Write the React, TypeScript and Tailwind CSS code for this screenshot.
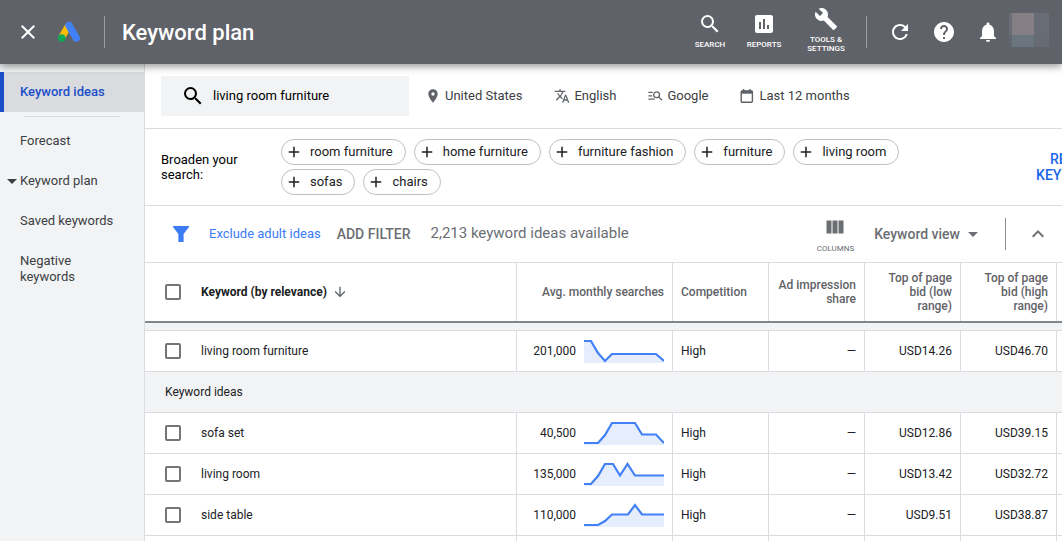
import React, { useState } from "react";
import {
  MdAdd,
  MdArrowDownward,
  MdArrowDropDown,
  MdAssessment,
  MdBuild,
  MdClose,
  MdExpandLess,
  MdHelp,
  MdNotifications,
  MdPlace,
  MdRefresh,
  MdSearch,
  MdTranslate,
} from "react-icons/md";

type Point = [number, number];

interface Keyword {
  name: string;
  searches: string;
  competition: string;
  share: string;
  low: string;
  high: string;
  trend: Point[];
}

const provided: Keyword[] = [
  {
    name: "living room furniture",
    searches: "201,000",
    competition: "High",
    share: "—",
    low: "USD14.26",
    high: "USD46.70",
    trend: [[0, 2], [7, 2], [14, 14], [21, 22], [28, 15], [72, 15], [80, 22]],
  },
];

const ideas: Keyword[] = [
  {
    name: "sofa set",
    searches: "40,500",
    competition: "High",
    share: "—",
    low: "USD12.86",
    high: "USD39.15",
    trend: [[0, 22], [14, 22], [21, 14], [28, 2], [51, 2], [58, 13.5], [72, 13.5], [80, 22]],
  },
  {
    name: "living room",
    searches: "135,000",
    competition: "High",
    share: "—",
    low: "USD13.42",
    high: "USD32.72",
    trend: [[0, 22], [7, 22], [14, 14], [21, 2], [29, 2], [36, 13.5], [43.5, 2], [51, 13.5], [80, 13.5]],
  },
  {
    name: "side table",
    searches: "110,000",
    competition: "High",
    share: "—",
    low: "USD9.51",
    high: "USD38.87",
    trend: [[0, 22], [14, 22], [21, 18], [28, 11.5], [44, 11.5], [51, 2], [58, 11.5], [80, 11.5]],
  },
];

const chips = [
  "room furniture",
  "home furniture",
  "furniture fashion",
  "furniture",
  "living room",
  "sofas",
  "chairs",
];

function AdsLogo() {
  return (
    <svg viewBox="0 0 24 24" className="size-6" fill="none" aria-hidden="true">
      <path d="M12.6 5.6 L5.7 17.6" stroke="#fbbc04" strokeWidth="7" strokeLinecap="butt" />
      <path d="M13 5.5 L20.2 18" stroke="#4280f5" strokeWidth="7.4" strokeLinecap="round" />
      <circle cx="5.7" cy="18" r="3.8" fill="#0fa958" />
    </svg>
  );
}

function FilterIcon() {
  return (
    <svg viewBox="0 0 16 16" className="size-4" fill="currentColor" aria-hidden="true">
      <path d="M0 0h16v1L10.6 8V16H5.4V8L0 1z" />
    </svg>
  );
}

function ColumnsIcon() {
  return (
    <svg viewBox="0 0 18 14" className="h-[14px] w-[18px]" fill="currentColor" aria-hidden="true">
      <path d="M0.5 0.5h5v13h-5zM6.5 0.5h5v13h-5zM12.5 0.5h5v13h-5z" />
    </svg>
  );
}

function NetworkIcon() {
  return (
    <svg
      viewBox="0 0 15 12"
      className="h-3 w-[15px] text-[#5f6368]"
      fill="none"
      stroke="currentColor"
      strokeWidth="1.3"
      aria-hidden="true"
    >
      <path d="M0.4 2.4h4.4M0.4 5.8h3.8M0.4 9.2h6.2" />
      <circle cx="8.6" cy="4.8" r="2.9" />
      <path d="M10.6 6.9 L14 10.2" />
    </svg>
  );
}

function CalendarIcon() {
  return (
    <svg
      viewBox="0 0 14 14"
      className="size-[14px] text-[#5f6368]"
      fill="none"
      stroke="currentColor"
      aria-hidden="true"
    >
      <rect x="1.2" y="2" width="11.2" height="11.2" rx="1" strokeWidth="1.4" />
      <path d="M1 3.2h11.6" strokeWidth="3" />
      <path d="M3.6 0v2M10 0v2" strokeWidth="1.4" />
    </svg>
  );
}

function Sparkline({ points }: { points: Point[] }) {
  const line = points.map((p) => p.join(",")).join(" ");
  return (
    <svg viewBox="0 0 80 24" className="h-6 w-20 shrink-0" aria-hidden="true">
      <polygon points={`0,24 ${line} 80,24`} fill="#e6edfd" />
      <polyline points={line} fill="none" stroke="#4280f5" strokeWidth="2.2" />
    </svg>
  );
}

function Check({ label }: { label: string }) {
  const [on, setOn] = useState(false);
  return (
    <input
      type="checkbox"
      aria-label={label}
      checked={on}
      onChange={() => setOn(!on)}
      className="block size-4 shrink-0 appearance-none rounded-xs border-2 border-[#757575] bg-white checked:bg-[#1a73e8]"
    />
  );
}

function KeywordRow({ item }: { item: Keyword }) {
  return (
    <tr className="h-[41px] [&>td]:border-b [&>td]:border-r [&>td]:border-[#dadce0] [&>td]:p-0 [&>td]:px-2">
      <td>
        <div className="flex items-center gap-5 pl-3">
          <Check label={item.name} />
          {item.name}
        </div>
      </td>
      <td>
        <div className="flex items-center justify-end gap-2">
          {item.searches}
          <Sparkline points={item.trend} />
        </div>
      </td>
      <td>{item.competition}</td>
      <td className="text-right">{item.share}</td>
      <td className="text-right">{item.low}</td>
      <td className="text-right">{item.high}</td>
      <td className="border-r-0! px-0!" />
    </tr>
  );
}

function Header() {
  return (
    <header className="relative z-10 flex h-16 shrink-0 items-center bg-[#5f6269] px-[13px] text-white shadow-[0_2px_8px_rgba(0,0,0,0.45)]">
      <button aria-label="Close" className="ml-[3px] mr-4">
        <MdClose className="size-6" />
      </button>
      <AdsLogo />
      <div className="ml-6 mr-[17px] h-8 w-px bg-[#9a9da3]" />
      <h1 className="flex-1 text-[22px] font-medium">Keyword plan</h1>
      <div className="flex items-center pb-1 text-[8px] font-medium leading-[9px]">
        <button className="flex w-10 flex-col items-center gap-1">
          <MdSearch className="size-6" />
          SEARCH
        </button>
        <button className="ml-3 flex w-11 flex-col items-center gap-1">
          <MdAssessment className="size-6" />
          REPORTS
        </button>
        <button className="ml-4 flex w-12 flex-col items-center gap-1">
          <MdBuild className="size-6" />
          <span>
            TOOLS &amp;
            <br />
            SETTINGS
          </span>
        </button>
      </div>
      <div className="ml-4 mr-[21px] h-8 w-px bg-[#9a9da3]" />
      <div className="flex items-center gap-5">
        <button aria-label="Refresh">
          <MdRefresh className="size-6" />
        </button>
        <button aria-label="Help">
          <MdHelp className="size-6" />
        </button>
        <button aria-label="Notifications">
          <MdNotifications className="size-6" />
        </button>
      </div>
      <div className="ml-[9px] grid h-[34px] w-10 grid-cols-[3px_22px_15px] grid-rows-[22px_12px] self-start mt-[13px]">
        <div className="bg-[#6b6d75]" />
        <div className="bg-[#857e85]" />
        <div className="bg-[#686c75]" />
        <div className="bg-[#62666e]" />
        <div className="bg-[#6b757d]" />
        <div className="bg-[#666b74]" />
      </div>
    </header>
  );
}

function Sidebar() {
  return (
    <nav className="w-[145px] shrink-0 border-r border-[#dadce0] bg-[#f1f3f4] pt-2 text-[13px] leading-4 text-[#3c4043]">
      <a
        href="#ideas"
        className="flex h-10 items-center border-l-4 border-[#1a4fc9] bg-[#dadbdf] pl-4 font-medium text-[#1a4fc9]"
      >
        Keyword ideas
      </a>
      <div className="mx-6 my-1 h-px bg-[#dadce0]" />
      <a href="#forecast" className="flex h-10 items-center pl-5">
        Forecast
      </a>
      <a href="#plan" className="flex h-10 items-center">
        <MdArrowDropDown className="-mr-1 size-6" />
        Keyword plan
      </a>
      <a href="#saved" className="flex h-10 items-center pl-5">
        Saved keywords
      </a>
      <a href="#negative" className="flex py-3 pl-5 pr-10">
        Negative keywords
      </a>
    </nav>
  );
}

export default function App() {
  const [query, setQuery] = useState("living room furniture");
  return (
    <div className="flex h-screen flex-col overflow-hidden bg-white font-['Roboto',sans-serif] text-[#202124]">
      <Header />
      <div className="flex min-h-0 flex-1">
        <Sidebar />
        <main className="min-w-0 flex-1 overflow-hidden">
          <section className="flex h-[65px] items-center border-b border-[#dadce0] pl-4 text-[13px] leading-5 text-[#3c4043]">
            <label className="flex h-10 w-[248px] items-center gap-2 bg-[#f1f3f4] pl-5 text-black">
              <MdSearch className="size-6 shrink-0" />
              <input
                aria-label="Keywords"
                value={query}
                onChange={(e) => setQuery(e.target.value)}
                className="h-5 min-w-0 flex-1 bg-transparent outline-none"
              />
            </label>
            <button className="ml-4 flex items-center gap-1">
              <MdPlace className="size-4 text-[#5f6368]" />
              United States
            </button>
            <button className="ml-8 flex items-center gap-1">
              <MdTranslate className="size-4 text-[#5f6368]" />
              English
            </button>
            <button className="ml-8 flex items-center gap-1">
              <NetworkIcon />
              Google
            </button>
            <button className="ml-8 flex items-center gap-[5px]">
              <CalendarIcon />
              Last 12 months
            </button>
          </section>

          <section className="flex h-[77px] items-center border-b border-[#dadce0] pl-4 text-[13px]">
            <p className="w-[120px] shrink-0 pr-8 leading-[15px] text-black">Broaden your search:</p>
            <div className="flex w-[692px] shrink-0 flex-wrap gap-x-2 gap-y-1 leading-5">
              {chips.map((c) => (
                <button
                  key={c}
                  className="flex h-[26px] items-center gap-[7px] rounded-full border border-[#bdc1c6] pl-[3px] pr-3"
                >
                  <MdAdd className="size-[18px]" />
                  {c}
                </button>
              ))}
            </div>
            <button className="ml-15 w-20 shrink-0 text-center text-sm font-medium leading-4 text-[#1a67e8]">
              REFINE KEYWORDS
            </button>
          </section>

          <section className="flex h-[57px] items-center border-b border-[#dadce0] pl-7 pr-3 text-sm text-[#6b6e73]">
            <button aria-label="Filter" className="text-[#3b7cf5]">
              <FilterIcon />
            </button>
            <button className="ml-5 text-[13px] text-[#3b7cf5]">Exclude adult ideas</button>
            <button className="ml-4 font-medium">ADD FILTER</button>
            <p className="ml-5 flex-1 text-[15px]">2,213 keyword ideas available</p>
            <button className="flex flex-col items-center gap-2.5 pt-1 text-[8px] leading-[9px]">
              <ColumnsIcon />
              COLUMNS
            </button>
            <button className="ml-5 flex items-center font-medium">
              Keyword view
              <MdArrowDropDown className="ml-px size-6" />
            </button>
            <div className="mx-5 h-8 w-px bg-[#8a8d91]" />
            <button aria-label="Collapse">
              <MdExpandLess className="size-6" />
            </button>
          </section>

          <table className="w-full table-fixed border-separate border-spacing-0 text-xs">
            <colgroup>
              <col className="w-[372px]" />
              <col className="w-[156px]" />
              <col className="w-24" />
              <col className="w-24" />
              <col className="w-24" />
              <col className="w-24" />
              <col />
            </colgroup>
            <thead>
              <tr className="h-[58px] text-right leading-[14px] text-[#5f6368] [&>th]:border-r [&>th]:border-[#dadce0] [&>th]:p-0 [&>th]:px-2 [&>th]:font-medium">
                <th className="text-left">
                  <div className="flex items-center gap-5 pl-3">
                    <Check label="Select all keywords" />
                    <span className="flex items-center gap-[5px] font-bold text-[#202124]">
                      Keyword (by relevance)
                      <MdArrowDownward className="size-4 text-[#5f6368]" />
                    </span>
                  </div>
                </th>
                <th>Avg. monthly searches</th>
                <th className="text-left">Competition</th>
                <th>Ad impression share</th>
                <th>Top of page bid (low range)</th>
                <th>Top of page bid (high range)</th>
                <th className="border-r-0! px-0!" />
              </tr>
            </thead>
            <tbody>
              <tr className="h-2.5">
                <td
                  colSpan={7}
                  className="border-t-2 border-b border-t-[#80868b] border-b-[#dadce0] bg-[#f1f3f4] p-0"
                />
              </tr>
              {provided.map((k) => (
                <KeywordRow key={k.name} item={k} />
              ))}
              <tr className="h-[41px]">
                <td colSpan={7} className="border-b border-[#dadce0] bg-[#f1f3f4] p-0 pl-5">
                  Keyword ideas
                </td>
              </tr>
              {ideas.map((k) => (
                <KeywordRow key={k.name} item={k} />
              ))}
              <tr className="h-[41px] [&>td]:border-r [&>td]:border-[#dadce0]">
                <td />
                <td />
                <td />
                <td />
                <td />
                <td />
                <td className="border-r-0!" />
              </tr>
            </tbody>
          </table>
        </main>
      </div>
    </div>
  );
}
